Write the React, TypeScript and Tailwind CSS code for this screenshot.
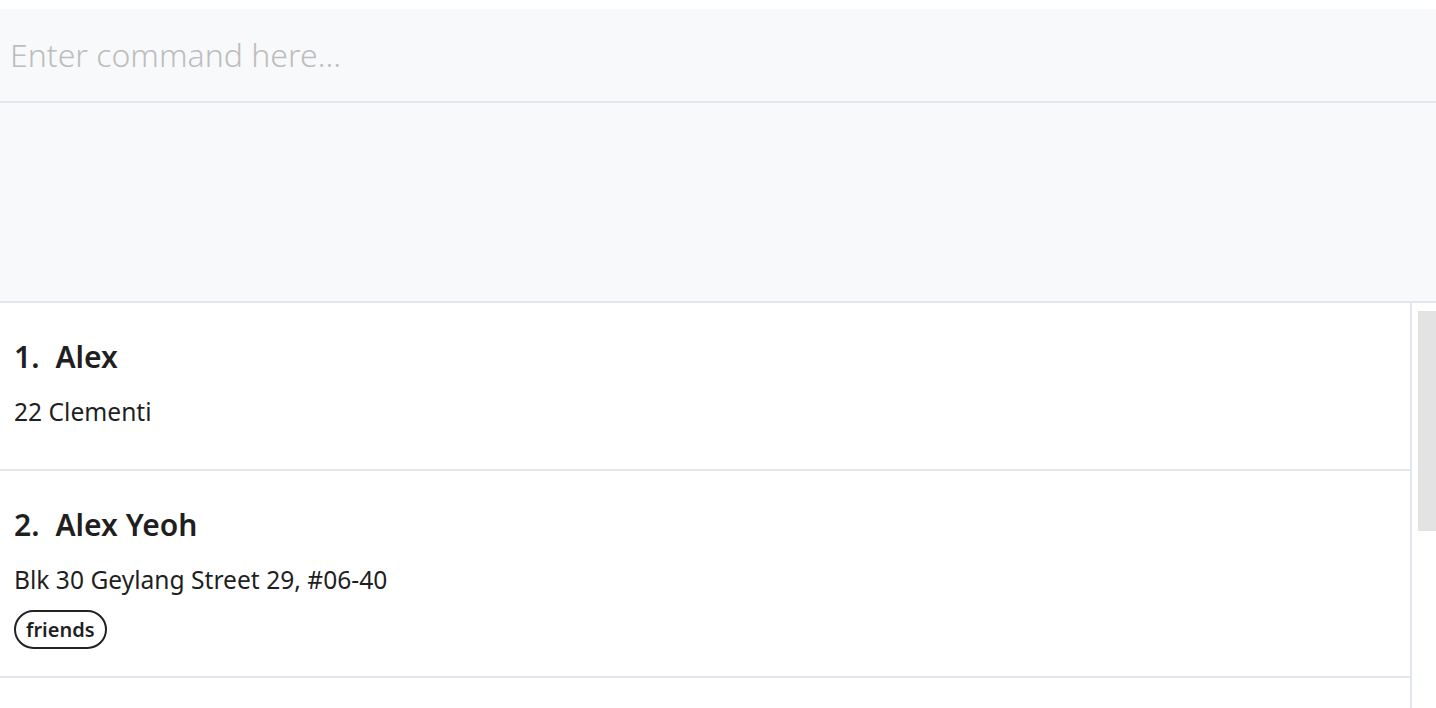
import React from 'react';

const people = [
  { name: 'Alex', address: '22 Clementi', tags: [] as string[] },
  { name: 'Alex Yeoh', address: 'Blk 30 Geylang Street 29, #06-40', tags: ['friends'] },
  { name: 'Bernice Yu', address: 'Blk 30 Lorong 3 Serangoon Gardens, #07-18', tags: ['colleagues', 'friends'] },
];

export default function App() {
  return (
    <div className="h-[708px] overflow-hidden bg-white pt-[9px] text-[#1f1f1f] font-['Noto_Sans','Open_Sans',sans-serif]">
      {/* Command box */}
      <div className="h-[94px] bg-[#f8f9fb] border-b-2 border-[#e2e6ee] flex items-center">
        <input
          className="w-full bg-transparent px-[10px] text-[32px] font-light text-[#333] placeholder:text-[#bdbdbd] outline-none"
          placeholder="Enter command here..."
        />
      </div>

      {/* Result display */}
      <div className="h-[200px] bg-[#f8f9fb] border-b-2 border-[#e2e6ee]"></div>

      {/* Person list */}
      <div className="flex h-[405px]">
        <div className="flex-1 border-r-2 border-[#e2e6ee] overflow-hidden">
          {people.map((p, i) => (
            <div key={p.name} className="border-b-2 border-[#e2e6ee] px-[14px] pt-[34px] pb-[27px]">
              <div className="flex items-center gap-[16px] text-[30px] font-semibold leading-[40px]">
                <span>{i + 1}.</span>
                <span>{p.name}</span>
              </div>
              <div className="mt-[19px] text-[24.6px] leading-[32px]">{p.address}</div>
              <div className="mt-[14px] flex gap-2">
                {p.tags.map((t) => (
                  <span
                    key={t}
                    className="inline-flex h-[39px] items-center rounded-full border-2 border-[#222] px-[10px] text-[20px] font-semibold"
                  >
                    {t}
                  </span>
                ))}
              </div>
            </div>
          ))}
        </div>
        <div className="w-[24px] pl-[6px] pt-[8px]">
          <div className="h-[220px] w-[18px] bg-[#e3e3e3]"></div>
        </div>
      </div>
    </div>
  );
}
